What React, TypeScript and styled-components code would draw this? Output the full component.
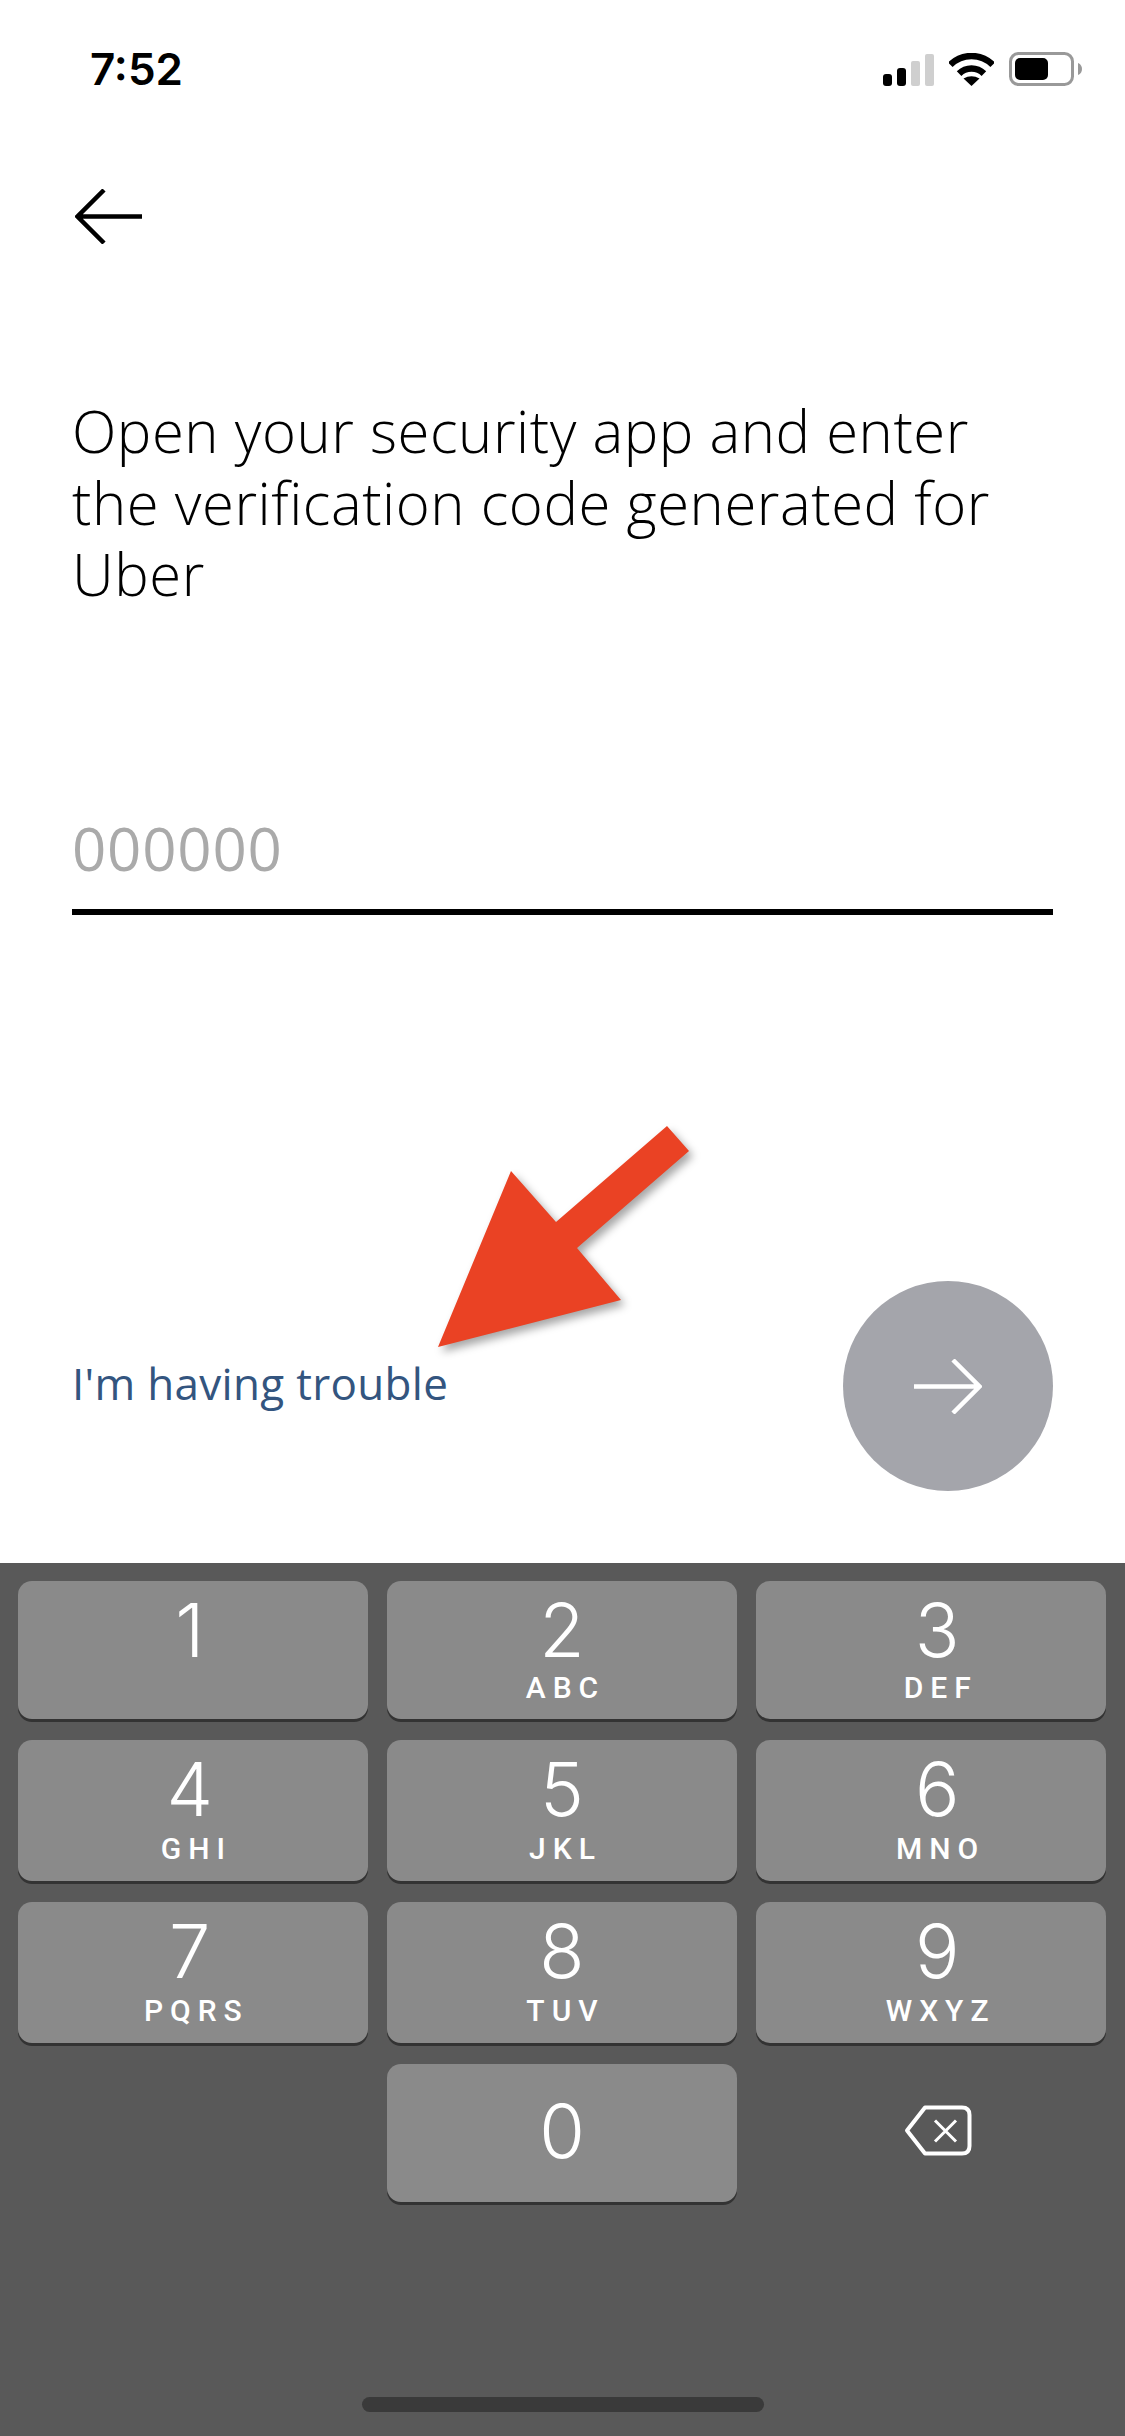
import styled, { createGlobalStyle } from 'styled-components';

const GlobalStyle = createGlobalStyle`
  html, body { margin: 0; padding: 0; background: #fff; }
`;

const KEYS = [
  { digit: '1', letters: '' },
  { digit: '2', letters: 'ABC' },
  { digit: '3', letters: 'DEF' },
  { digit: '4', letters: 'GHI' },
  { digit: '5', letters: 'JKL' },
  { digit: '6', letters: 'MNO' },
  { digit: '7', letters: 'PQRS' },
  { digit: '8', letters: 'TUV' },
  { digit: '9', letters: 'WXYZ' },
];

export default function App() {
  return (
    <Page>
      <GlobalStyle />
      <Screen>
        <StatusBar>
          <Clock>7:52</Clock>
          <StatusIcons>
            <svg width="51" height="32" viewBox="0 0 51 32">
              <rect x="0" y="20" width="9" height="12" rx="3" fill="#000" />
              <rect x="14" y="14" width="9" height="18" rx="3" fill="#000" />
              <rect x="28" y="7" width="9" height="25" rx="2" fill="#cfcfcf" />
              <rect x="42" y="0" width="9" height="32" rx="2" fill="#cfcfcf" />
            </svg>
            <svg width="45" height="33" viewBox="0 0 45 33">
              <path d="M1.3 11.8 A30 30 0 0 1 43.7 11.8" fill="none" stroke="#000" strokeWidth="6.5" />
              <path d="M10.1 20.6 A17.5 17.5 0 0 1 34.9 20.6" fill="none" stroke="#000" strokeWidth="6.5" />
              <path d="M22.5 33 L14.5 25.5 Q22.5 21 30.5 25.5 Z" fill="#000" />
            </svg>
            <svg width="73" height="34" viewBox="0 0 73 34">
              <rect x="1.5" y="1.5" width="62" height="31" rx="8" fill="none" stroke="#999" strokeWidth="3" />
              <rect x="6" y="6" width="33" height="22" rx="5" fill="#000" />
              <path d="M69 11 C72 12 73 15 73 17 C73 19 72 22 69 23 Z" fill="#999" />
            </svg>
          </StatusIcons>
        </StatusBar>

        <BackIcon width="67" height="55" viewBox="0 0 67 55">
          <path d="M29 1 L2.5 27.5 L29 54 M2.5 27.5 H67" fill="none" stroke="#000" strokeWidth="4.5" />
        </BackIcon>

        <Prompt>
          Open your security app and enter
          <br />
          the verification code generated for
          <br />
          Uber
        </Prompt>

        <CodeField>
          <Placeholder>000000</Placeholder>
        </CodeField>

        <Footer>
          <TroubleLink>I'm having trouble</TroubleLink>
          <NextButton>
            <svg width="68" height="55" viewBox="0 0 68 55">
              <path d="M39 1 L65.5 27.5 L39 54 M65.5 27.5 H0" fill="none" stroke="#fff" strokeWidth="4.5" />
            </svg>
          </NextButton>
        </Footer>

        <Annotation width="270" height="240" viewBox="0 0 270 240">
          <polygon
            points="8,227 81,51 126,102 237,6 259,31 147,128 191,180"
            fill="#ea4224"
          />
        </Annotation>
      </Screen>

      <Keyboard>
        <KeyGrid>
          {KEYS.map((key) => (
            <Key key={key.digit}>
              <Digit>{key.digit}</Digit>
              {key.letters && <Letters>{key.letters}</Letters>}
            </Key>
          ))}
          <ZeroKey>
            <Digit>0</Digit>
          </ZeroKey>
          <Backspace>
            <svg width="68" height="51" viewBox="0 0 68 51">
              <path
                d="M21 2.5 H58 Q65.5 2.5 65.5 10 V41 Q65.5 48.5 58 48.5 H21 L3 25.5 Z"
                fill="none"
                stroke="#fff"
                strokeWidth="4"
                strokeLinejoin="round"
              />
              <path d="M31 15.5 L52 36.5 M52 15.5 L31 36.5" fill="none" stroke="#fff" strokeWidth="3" />
            </svg>
          </Backspace>
        </KeyGrid>
        <HomeIndicator />
      </Keyboard>
    </Page>
  );
}

const Page = styled.div`
  display: flex;
  flex-direction: column;
  width: 1125px;
  height: 2436px;
  overflow: hidden;
  background: #fff;
`;

const Screen = styled.div`
  position: relative;
  display: flex;
  flex-direction: column;
  height: 1563px;
  padding: 0 72px;
  box-sizing: border-box;
`;

const StatusBar = styled.div`
  display: flex;
  justify-content: space-between;
  align-items: flex-start;
  height: 34px;
  margin: 0 -29px 0 18px;
  padding-top: 52px;
`;

const Clock = styled.div`
  font-family: Inter, 'Liberation Sans', sans-serif;
  font-weight: 600;
  font-size: 44px;
  line-height: 34px;
  color: #000;
`;

const StatusIcons = styled.div`
  display: flex;
  align-items: flex-end;
  gap: 15px;
`;

const BackIcon = styled.svg`
  display: block;
  margin: 103px 0 0 3px;
`;

const Prompt = styled.h1`
  margin: 151px 0 0;
  font-family: 'Open Sans', sans-serif;
  font-weight: 300;
  font-size: 58px;
  letter-spacing: 0.55px;
  line-height: 71.5px;
  color: #000;
`;

const CodeField = styled.div`
  display: flex;
  align-items: flex-end;
  height: 106px;
  margin-top: 193px;
  border-bottom: 6px solid #000;
`;

const Placeholder = styled.div`
  font-family: 'Open Sans', sans-serif;
  font-size: 60px;
  letter-spacing: 0.8px;
  line-height: 72px;
  color: #aaa;
  margin-bottom: 25px;
`;

const Footer = styled.div`
  display: flex;
  justify-content: space-between;
  align-items: center;
  margin-top: auto;
  margin-bottom: 72px;
`;

const TroubleLink = styled.a`
  font-family: 'Open Sans', sans-serif;
  font-size: 44px;
  letter-spacing: 0.3px;
  line-height: 56px;
  margin-bottom: 6px;
  color: #33557f;
`;

const NextButton = styled.div`
  display: flex;
  align-items: center;
  justify-content: center;
  width: 210px;
  height: 210px;
  border-radius: 50%;
  background: #a4a5ab;
`;

const Annotation = styled.svg`
  position: absolute;
  left: 430px;
  top: 1120px;
  overflow: visible;
  filter: drop-shadow(4px 5px 4px rgba(0, 0, 0, 0.35));
`;

const Keyboard = styled.div`
  display: flex;
  flex-direction: column;
  flex: 1;
  background: #595959;
  padding: 18px 19px 0 18px;
`;

const KeyGrid = styled.div`
  display: grid;
  grid-template-columns: repeat(3, 1fr);
  grid-template-rows: 138px 141px 141px 138px;
  column-gap: 19.5px;
  row-gap: 21px;
`;

const Digit = styled.div`
  font-family: Inter, 'Liberation Sans', sans-serif;
  font-weight: 300;
  font-size: 74px;
  line-height: 60px;
`;

const Letters = styled.div`
  font-family: Roboto, 'Liberation Sans', sans-serif;
  font-weight: 500;
  font-size: 30px;
  line-height: 30px;
  letter-spacing: 7px;
  margin-right: -7px;
  margin-top: 13px;
`;

const Key = styled.div`
  display: flex;
  flex-direction: column;
  align-items: center;
  padding-top: 19px;
  border-radius: 14px;
  background: #8a8a8a;
  box-shadow: 0 3px 0 #333;
  color: #fff;
  box-sizing: border-box;

  /* the letters sit lower from the second row on, the columns are not quite centred */
  &:nth-child(n + 4) ${Letters} {
    margin-top: 15px;
  }
  &:nth-child(3n + 1) ${Digit} {
    margin-right: 6px;
  }
  &:nth-child(3n) {
    padding-left: 12px;
  }
`;

const ZeroKey = styled(Key)`
  grid-column: 2;
  justify-content: center;
  padding-top: 0;
  padding-bottom: 5px;
  &:nth-child(3n + 1) ${Digit} {
    margin-right: 0;
  }
`;

const Backspace = styled.div`
  display: flex;
  align-items: center;
  justify-content: center;
  padding-left: 14px;
  padding-bottom: 6px;
`;

const HomeIndicator = styled.div`
  width: 402px;
  height: 15px;
  margin: 195px 0 0 344px;
  border-radius: 8px;
  background: #3a3a3a;
`;
